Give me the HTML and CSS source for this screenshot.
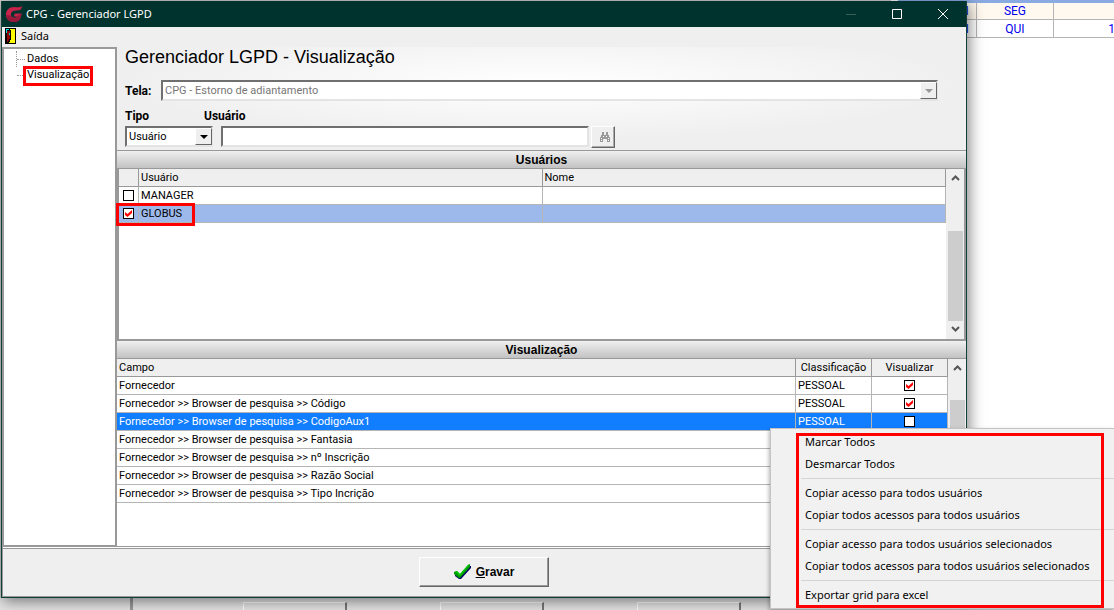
FILE: index.html
```
<!DOCTYPE html>
<html lang="pt-BR">
  <head>
    <meta charset="UTF-8" />
    <meta name="viewport" content="width=device-width, initial-scale=1.0" />
    <title>CPG - Gerenciador LGPD</title>
    <link rel="stylesheet" href="styles.css">
  </head>

  <body class="desktop">
    <!-- tela de fundo -->
    <table class="agenda">
      <tr class="feriado">
        <td class="direita">I</td>
        <td>SEG</td>
        <td></td>
      </tr>
      <tr>
        <td class="direita">I</td>
        <td>QUI</td>
        <td class="fim">1</td>
      </tr>
    </table>
    <div class="barra-fundo">
      <span class="botao-fundo"></span>
      <span class="botao-fundo"></span>
      <span class="botao-fundo"></span>
    </div>

    <!-- janela principal -->
    <main class="janela">
      <header class="titulo">
        <svg class="logo" viewBox="0 0 18 18" width="18" height="18">
          <path d="M17 1c-2 2-5 1-8 1C4 2 1 5 1 9.500 1 14 4 17 9 17c4 0 7-2 7.500-8.500H10L8.500 11.500H12c-1 2-6 2-6-2C6 6 9 5.500 12 5.500 15 5.500 17 4 17 1z" fill="#c8234a" />
          <path d="M1 10c0 4 3 7 8 7 4 0 7-2 7.500-8.500L12 11.500c-1 3-5 2-6-1z" fill="#96193b" />
        </svg>
        <span class="titulo-texto">CPG - Gerenciador LGPD</span>
        <button class="controle apagado" aria-label="Minimizar">
          <svg viewBox="0 0 12 12" width="12" height="12"><path d="M1 6.500h10" /></svg>
        </button>
        <button class="controle" aria-label="Maximizar">
          <svg viewBox="0 0 12 12" width="12" height="12"><path d="M1.500 1.500h9v9h-9z" /></svg>
        </button>
        <button class="controle" aria-label="Fechar">
          <svg viewBox="0 0 12 12" width="12" height="12"><path d="M1 1l10 10M11 1L1 11" /></svg>
        </button>
      </header>

      <nav class="menu">
        <button class="menu-item">
          <svg viewBox="0 0 11 16" width="11" height="16" shape-rendering="crispEdges">
            <path d="M0 0h11v16H0z" fill="#000" />
            <path d="M1 1h9v14H1z" fill="#ff0" />
            <path d="M1 1h4v1h1v10H5v2H4v1H1z" fill="#000" />
            <path d="M2 3h3v8H4v2H3v1H2z" fill="#900000" />
            <path d="M1 1h3v1H1zM1 2h1v3H1zM4 5h1v2H4z" fill="#0dd" />
          </svg>
          Saída
        </button>
      </nav>

      <div class="corpo">
        <aside class="arvore">
          <ul>
            <li><a href="#dados">Dados</a></li>
            <li><a href="#visualizacao" class="marcado">Visualização</a></li>
          </ul>
        </aside>

        <section class="conteudo">
          <form class="filtro">
            <h1>Gerenciador LGPD - Visualização</h1>
            <div class="linha">
              <label for="tela">Tela:</label>
              <div class="combo combo-tela">
                <select id="tela" disabled>
                  <option>CPG - Estorno de adiantamento</option>
                </select>
                <span class="seta"></span>
              </div>
            </div>
            <div class="campos">
              <label for="tipo">Tipo</label>
              <label for="usuario">Usuário</label>
              <div class="combo">
                <select id="tipo">
                  <option>Usuário</option>
                </select>
                <span class="seta"></span>
              </div>
              <div class="busca">
                <input type="text" id="usuario" />
                <button type="button" class="procurar" aria-label="Procurar">
                  <svg viewBox="0 0 12 12" width="12" height="12" shape-rendering="crispEdges">
                    <path d="M3 1h2v3h2V1h2v3h1v2h1v5H8V8H4v3H1V6h1V4h1z" fill="#999" />
                    <path d="M2 7h1v1H2zM2 9h1v1H2zM9 7h1v1H9zM9 9h1v1H9zM4 5h1v1H4zM7 5h1v1H7z" fill="#fff" />
                  </svg>
                </button>
              </div>
            </div>
          </form>

          <h2 class="faixa">Usuários</h2>
          <div class="grade grade-usuarios">
            <div class="area">
              <table class="tabela">
                <colgroup>
                  <col class="col-check" />
                  <col />
                  <col />
                </colgroup>
                <thead>
                  <tr><th></th><th>Usuário</th><th>Nome</th></tr>
                </thead>
                <tbody>
                  <tr>
                    <td><input type="checkbox" aria-label="MANAGER" /></td>
                    <td>MANAGER</td>
                    <td></td>
                  </tr>
                  <tr class="ativo">
                    <td><input type="checkbox" aria-label="GLOBUS" checked /></td>
                    <td>GLOBUS</td>
                    <td></td>
                  </tr>
                </tbody>
              </table>
              <span class="destaque destaque-globus"></span>
            </div>
            <div class="rolagem">
              <svg viewBox="0 0 9 6" width="9" height="6"><path d="M1 5l3.500-3.500L8 5" /></svg>
              <span class="trilho"></span>
              <span class="polegar"></span>
              <svg viewBox="0 0 9 6" width="9" height="6"><path d="M1 1l3.500 3.500L8 1" /></svg>
            </div>
          </div>

          <h2 class="faixa">Visualização</h2>
          <div class="grade grade-campos">
            <div class="area">
              <table class="tabela">
                <colgroup>
                  <col />
                  <col class="col-media" />
                  <col class="col-media" />
                </colgroup>
                <thead>
                  <tr><th>Campo</th><th class="centro">Classificação</th><th class="centro">Visualizar</th></tr>
                </thead>
                <tbody>
                  <tr>
                    <td>Fornecedor</td>
                    <td>PESSOAL</td>
                    <td class="centro"><input type="checkbox" aria-label="Visualizar Fornecedor" checked /></td>
                  </tr>
                  <tr>
                    <td>Fornecedor &gt;&gt; Browser de pesquisa &gt;&gt; Código</td>
                    <td>PESSOAL</td>
                    <td class="centro"><input type="checkbox" aria-label="Visualizar Código" checked /></td>
                  </tr>
                  <tr class="selecionado">
                    <td>Fornecedor &gt;&gt; Browser de pesquisa &gt;&gt; CodigoAux1</td>
                    <td>PESSOAL</td>
                    <td class="centro"><input type="checkbox" aria-label="Visualizar CodigoAux1" /></td>
                  </tr>
                  <tr><td>Fornecedor &gt;&gt; Browser de pesquisa &gt;&gt; Fantasia</td><td></td><td></td></tr>
                  <tr><td>Fornecedor &gt;&gt; Browser de pesquisa &gt;&gt; nº Inscrição</td><td></td><td></td></tr>
                  <tr><td>Fornecedor &gt;&gt; Browser de pesquisa &gt;&gt; Razão Social</td><td></td><td></td></tr>
                  <tr><td>Fornecedor &gt;&gt; Browser de pesquisa &gt;&gt; Tipo Incrição</td><td></td><td></td></tr>
                </tbody>
              </table>
            </div>
            <div class="rolagem">
              <svg viewBox="0 0 9 6" width="9" height="6"><path d="M1 5l3.500-3.500L8 5" /></svg>
              <span class="trilho-curto"></span>
              <span class="polegar"></span>
              <svg viewBox="0 0 9 6" width="9" height="6"><path d="M1 1l3.500 3.500L8 1" /></svg>
            </div>
          </div>
        </section>
      </div>

      <footer class="rodape">
        <button class="gravar">
          <svg viewBox="0 0 17 15" width="17" height="15">
            <path d="M1 10l2-2 3 3 8-9 3 0v2L7 15H5L1 12z" fill="#006" />
            <path d="M0 8l3-1 3 3 8-9 2-1v3L6 14H5L0 10z" fill="#009a00" />
            <path d="M0 8l3-1 3 3 8-9 2-1-10 12L2 8z" fill="#00d000" />
          </svg>
          <span><u>G</u>ravar</span>
        </button>
      </footer>
    </main>

    <!-- menu de contexto da grade -->
    <div class="contexto">
      <button>Marcar Todos</button>
      <button>Desmarcar Todos</button>
      <hr />
      <button>Copiar acesso para todos usuários</button>
      <button>Copiar todos acessos para todos usuários</button>
      <hr />
      <button>Copiar acesso para todos usuários selecionados</button>
      <button>Copiar todos acessos para todos usuários selecionados</button>
      <hr />
      <button>Exportar grid para excel</button>
      <span class="destaque destaque-menu"></span>
    </div>
  </body>
</html>
```
FILE: styles.css
```
* {
  box-sizing: border-box;
}

body,
h1,
h2,
ul {
  margin: 0;
  padding: 0;
}

button,
input,
select {
  font: inherit;
  color: inherit;
}

.desktop {
  height: 100vh;
  overflow: hidden;
  display: flex;
  flex-direction: column;
  justify-content: space-between;
  position: relative;
  background: linear-gradient(#ccc, #ccc) 0 0 / 80% 2px no-repeat,
    linear-gradient(#ccc, #ccc) 0 0 / 2px 100% no-repeat, #fff;
  font-family: Roboto, "Liberation Sans", Arial, sans-serif;
  font-size: 11px;
  line-height: 14px;
  color: #000;
}

/* Fundo */
.agenda {
  align-self: flex-end;
  width: 234px;
  margin-right: -18px;
  table-layout: fixed;
  border-collapse: collapse;
  border-top: 3px solid #8aabe2;
  color: #0000f0;
  font-size: 12px;
  text-align: center;
}

.agenda td {
  height: 18px;
  padding: 0;
  border: 1px solid #b5b5b5;
}

.agenda .feriado {
  background: #fff9ef;
}

.agenda .direita {
  text-align: right;
  padding-right: 7px;
}

.agenda .fim {
  text-align: right;
  padding-right: 16px;
}

.barra-fundo {
  height: 12px;
  padding: 4px 0 0 243px;
  display: flex;
  gap: 93px;
  background: linear-gradient(90deg, #e4e4e4 130px, #999 130px, #999 133px, #e4e4e4 133px);
}

.botao-fundo {
  width: 104px;
  height: 24px;
  border: 1px solid #fff;
  border-right: 2px solid #777;
}

/* Janela */
.janela {
  position: absolute;
  top: 1px;
  left: 1px;
  right: 147px;
  bottom: 12px;
  display: flex;
  flex-direction: column;
  border: 1px solid #123f38;
  border-top: 0;
  background: #efefef;
  box-shadow: 2px 3px 14px rgba(0, 0, 0, 0.5);
}

.titulo {
  height: 26px;
  display: flex;
  align-items: center;
  padding-left: 3px;
  background: #00332d;
  color: #fff;
  font-family: "Noto Sans", "Open Sans", sans-serif;
}

.titulo-texto {
  flex: 1;
  padding-left: 3px;
}

.controle {
  width: 46px;
  height: 26px;
  padding: 0;
  border: 0;
  background: none;
  display: flex;
  align-items: center;
  justify-content: center;
}

.controle path {
  fill: none;
  stroke: #fff;
}

.apagado path {
  stroke: #385e58;
}

.menu {
  height: 20px;
  padding-left: 3px;
  font-family: "Noto Sans", "Open Sans", sans-serif;
}

.menu-item {
  display: flex;
  align-items: center;
  gap: 5px;
  height: 18px;
  padding: 0;
  border: 0;
  background: none;
}

.corpo {
  flex: 1;
  min-height: 0;
  display: flex;
}

.arvore {
  width: 114px;
  border: 2px solid #999;
  border-right: 1px solid #999;
  border-bottom: 1px solid #999;
  background: #fff;
}

.arvore ul {
  list-style: none;
  margin: 10px 0 0 12px;
  border-left: 1px dotted #999;
  height: 16px;
}

.arvore li {
  height: 16px;
  display: flex;
  margin-top: -8px;
  margin-bottom: 8px;
}

.arvore li + li {
  margin-top: 0;
}

.arvore li:first-child {
  margin-bottom: 0;
}

.arvore li::before {
  content: "";
  width: 8px;
  height: 8px;
  border-bottom: 1px dotted #999;
}

.arvore a {
  position: relative;
  padding: 1px 2px;
  color: #000;
  text-decoration: none;
}

.marcado::after {
  content: "";
  position: absolute;
  inset: -1px -2px -3px -2px;
  border: 3px solid #f00;
}

.conteudo {
  flex: 1;
  min-width: 0;
  display: flex;
  flex-direction: column;
  border-left: 1px solid #999;
}

/* Filtro */
.filtro {
  height: 103px;
  padding: 0 28px 0 8px;
  background: radial-gradient(ellipse 50% 55% at 50% 35%, #fff, #efefef);
}

.filtro h1 {
  height: 33px;
  font-family: "Liberation Sans", Arial, sans-serif;
  font-size: 18px;
  font-weight: normal;
  line-height: 20px;
}

.filtro label {
  font-size: 12px;
  font-weight: bold;
}

.linha {
  display: flex;
  align-items: center;
}

.linha label {
  width: 36px;
}

.combo {
  position: relative;
  height: 21px;
}

.combo-tela {
  flex: 1;
}

.combo select,
.busca input {
  appearance: none;
  width: 100%;
  height: 21px;
  padding: 0 2px;
  border: 2px solid;
  border-color: #6f6f6f #e4e4e4 #e4e4e4 #6f6f6f;
  border-radius: 0;
  background: #fff;
  outline: 0;
}

.combo select:disabled {
  color: #777;
  opacity: 1;
}

.seta {
  position: absolute;
  top: 2px;
  right: 1px;
  width: 17px;
  height: 17px;
  border: 1px solid;
  border-color: #fff #666 #666 #fff;
  background: #efefef;
  pointer-events: none;
}

.seta::after {
  content: "";
  position: absolute;
  top: 6px;
  left: 4px;
  border: 4px solid transparent;
  border-top-color: #000;
  border-bottom: 0;
}

select:disabled + .seta::after {
  border-top-color: #999;
}

.campos {
  display: grid;
  grid-template-columns: 88px 1fr;
  grid-template-rows: 17px 22px;
  margin-top: 8px;
}

.campos label + label {
  margin-left: -9px;
}

.busca {
  display: flex;
  gap: 2px;
  padding-left: 8px;
}

.busca input {
  width: 368px;
}

.procurar {
  width: 24px;
  height: 22px;
  padding: 3px 0 0 4px;
  border: 1px solid;
  border-color: #fff #666 #666 #fff;
  background: #efefef;
  box-shadow: inset -1px -1px #aaa;
}

/* Grades */
.faixa {
  height: 19px;
  border: 1px solid #999;
  border-width: 1px 0;
  background: linear-gradient(#f0f0f0, #c2c2c2);
  text-align: center;
  font-family: "Liberation Sans", Arial, sans-serif;
  font-size: 12px;
  line-height: 18px;
}

.grade {
  display: flex;
  background: #fff;
}

.grade-usuarios {
  height: 171px;
  border: 2px solid #999;
  border-width: 0 2px 1px 2px;
}

.grade-campos {
  flex: 1;
  min-height: 0;
}

.area {
  flex: 1;
  position: relative;
}

.tabela {
  width: 100%;
  table-layout: fixed;
  border-collapse: separate;
  border-spacing: 0;
}

.tabela th {
  background: #efefef;
  font-weight: normal;
  text-align: left;
}

.tabela th,
.tabela td {
  height: 18px;
  padding: 0 2px;
  border: 1px solid #b5b5b5;
  border-width: 0 1px 1px 0;
  white-space: nowrap;
}

.tabela th {
  border-color: #999;
}

.tabela .centro {
  text-align: center;
}

.col-check {
  width: 20px;
}

.col-media {
  width: 76px;
}

.ativo {
  background: #9db8ea;
}

.selecionado {
  background: #117dff;
  color: #fff;
}

.tabela input {
  appearance: none;
  display: block;
  width: 11px;
  height: 11px;
  margin: 0 2px;
  border: 1px solid #000;
  background: #fff;
}

.tabela .centro input {
  margin: 0 auto;
}

.tabela input:checked::after {
  content: "";
  display: block;
  width: 7px;
  height: 7px;
  margin: 1px;
  background: #f00;
  clip-path: polygon(0 29%, 36% 57%, 100% 0, 100% 43%, 36% 100%, 0 71%);
}

.rolagem {
  width: 18px;
  display: flex;
  flex-direction: column;
  align-items: center;
  padding: 6px 1px 7px;
  background: #efefef;
}

.rolagem path {
  fill: none;
  stroke: #555;
  stroke-width: 2;
}

.trilho {
  flex: 50;
}

.trilho-curto {
  height: 29px;
}

.polegar {
  flex: 90;
  width: 15px;
  background: #cdcdcd;
  margin-bottom: 5px;
}

/* Rodape */
.rodape {
  height: 51px;
  display: flex;
  justify-content: center;
  align-items: center;
  border: 1px solid #999;
  box-shadow: inset 0 1px #fff, inset 0 2px #999;
}

.gravar {
  width: 130px;
  height: 30px;
  display: flex;
  align-items: center;
  justify-content: center;
  gap: 5px;
  border: 1px solid;
  border-color: #fff #666 #666 #fff;
  background: #efefef;
  box-shadow: inset -1px -1px #999;
  font-family: "Liberation Sans", Arial, sans-serif;
  font-size: 12px;
  font-weight: bold;
}

/* Menu de contexto */
.contexto {
  position: absolute;
  right: 0;
  bottom: 1px;
  width: 344px;
  padding: 2px 0 2px 30px;
  border: 1px solid #c4c4c4;
  border-right: 0;
  background: #f1f1f1;
  box-shadow: -1px 2px 4px rgba(0, 0, 0, 0.3);
  font-family: "Noto Sans", "Open Sans", sans-serif;
}

.contexto button {
  display: block;
  width: 100%;
  height: 22px;
  padding: 0 4px;
  border: 0;
  background: none;
  text-align: left;
}

.contexto hr {
  height: 1px;
  margin: 3px 0;
  border: 0;
  background: #d4d4d4;
}

/* Marcacoes vermelhas */
.destaque {
  position: absolute;
  border: 3px solid #f00;
  pointer-events: none;
}

.destaque-globus {
  top: 34px;
  left: -3px;
  width: 79px;
  height: 23px;
}

.destaque-menu {
  inset: 4px 10px 0 25px;
}
```
